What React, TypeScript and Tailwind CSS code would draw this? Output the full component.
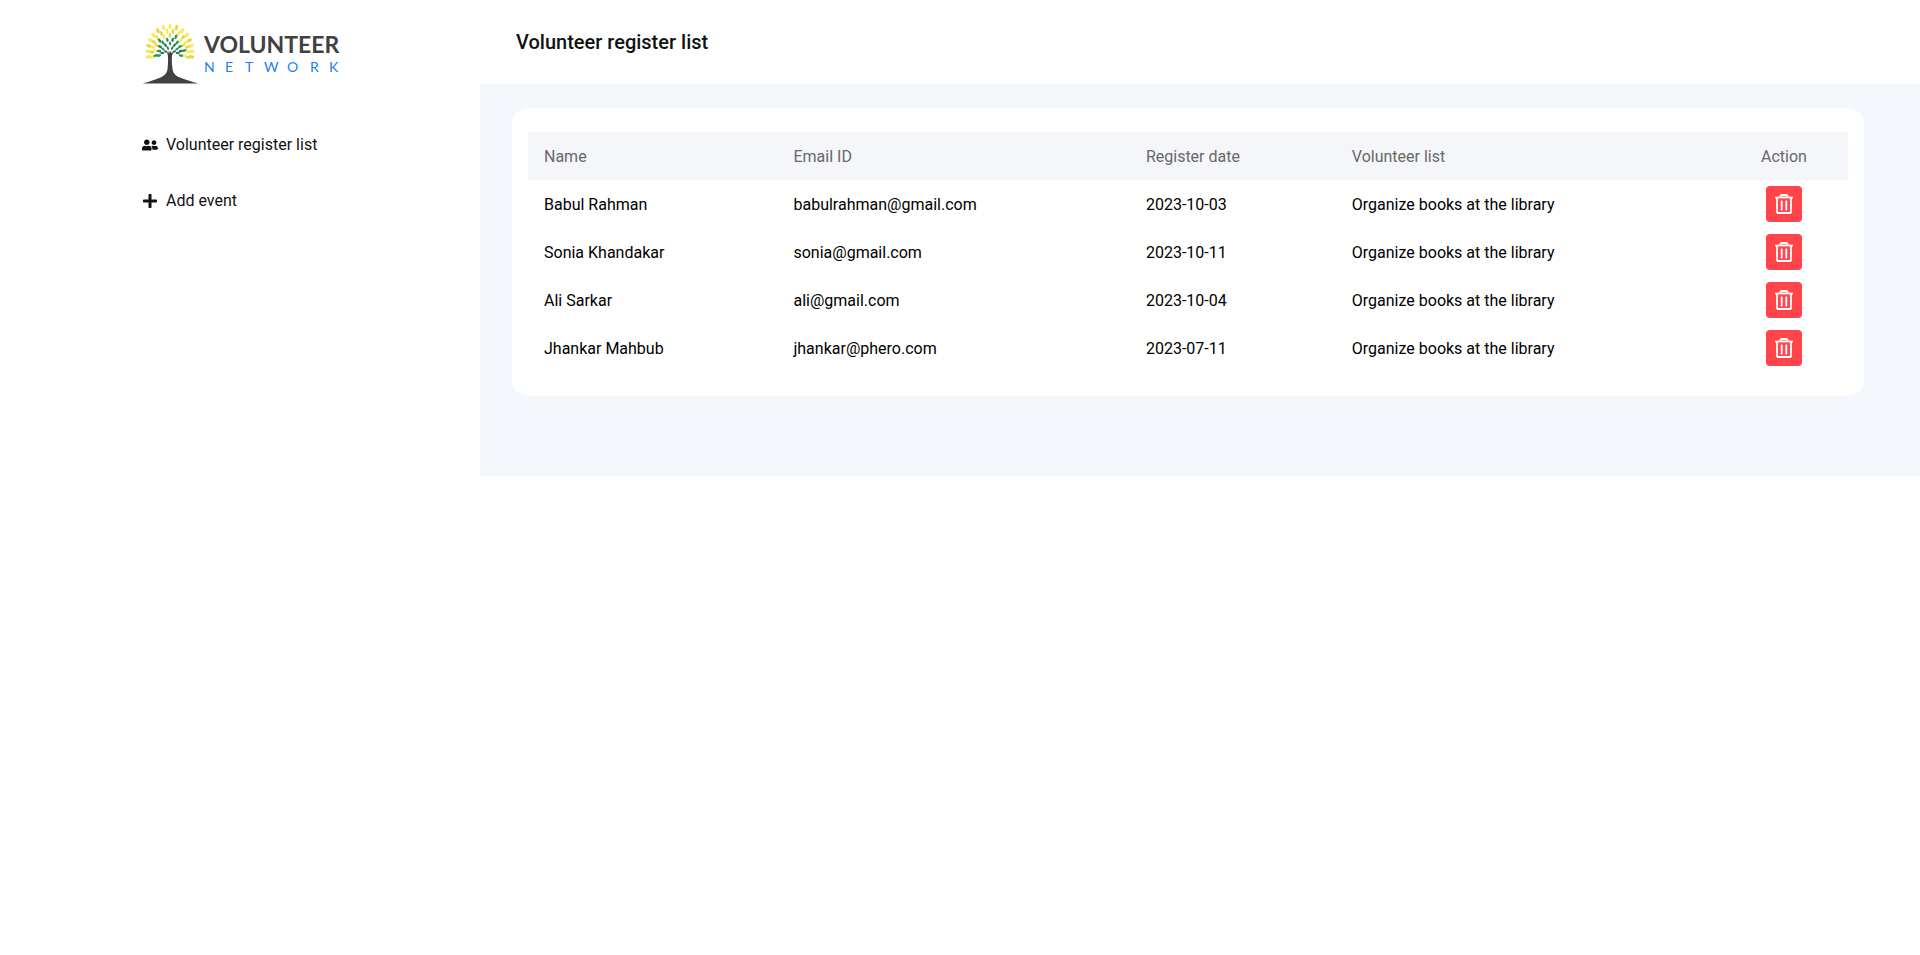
import { FaPlus, FaUserFriends } from "react-icons/fa";

const volunteers = [
  { name: "Babul Rahman", email: "babulrahman@gmail.com", date: "2023-10-03", event: "Organize books at the library" },
  { name: "Sonia Khandakar", email: "sonia@gmail.com", date: "2023-10-11", event: "Organize books at the library" },
  { name: "Ali Sarkar", email: "ali@gmail.com", date: "2023-10-04", event: "Organize books at the library" },
  { name: "Jhankar Mahbub", email: "jhankar@phero.com", date: "2023-07-11", event: "Organize books at the library" },
];

const YELLOW = "#faea55";
const GOLD = "#ecd545";
const GREEN = "#1f9d55";
const DARK = "#2a7355";

// Rings of leaves that fan out from the top of the trunk.
const rings = [
  { radius: 26.5, count: 15, spread: 200, colors: [YELLOW, YELLOW, GOLD] },
  { radius: 22, count: 14, spread: 206, colors: [YELLOW, GOLD] },
  { radius: 17.5, count: 11, spread: 200, colors: [GREEN, YELLOW, GOLD] },
  { radius: 13.5, count: 10, spread: 206, colors: [GREEN, GREEN, DARK] },
  { radius: 9.5, count: 7, spread: 180, colors: [DARK, GREEN] },
  { radius: 5.5, count: 4, spread: 140, colors: [DARK] },
];

function Logo() {
  return (
    <svg viewBox="0 0 196 60" className="h-15 w-[196px] overflow-visible" role="img" aria-label="Volunteer Network">
      {rings.map((ring) =>
        Array.from({ length: ring.count }, (_, i) => {
          const angle = -ring.spread / 2 + (ring.spread * i) / (ring.count - 1);
          const stretch = 1 - 0.18 * Math.pow(Math.sin((angle * Math.PI) / 180), 2);
          const size = 0.6 + ring.radius / 52;
          return (
            <ellipse
              key={`${ring.radius}-${i}`}
              cx="28"
              cy={29 - ring.radius * stretch}
              rx={1.45 * size}
              ry={2.6 * size}
              fill={ring.colors[i % ring.colors.length]}
              transform={`rotate(${angle} 28 29)`}
            />
          );
        }),
      )}
      <path
        d="M24.600 27.500l1.900 1.900.2-3 1.200 2.600 1.100-2.600.3 2.800 2.200-1.700-1.500 3.900c-.3 3-.2 7 .3 12 .6 5.500 3 8.400 8.200 10.400 5 2 12.200 4.100 18 5.700H.5c6-1.600 12.700-3.700 17.300-5.700 5.200-2.200 7.400-4.900 7.900-10.400.5-6 .5-9.300.1-12.300z"
        fill="#424142"
      />
      <text x="62" y="29" fontSize="23" fontWeight="700" fill="#424142" fontFamily="Lato, sans-serif">
        VOLUNTEER
      </text>
      {"NETWORK".split("").map((letter, i) => (
        <text
          key={i}
          x={[62, 83, 103, 122, 145, 168, 187][i]}
          y="48"
          fontSize="14"
          fill="#2080f5"
          fontFamily="Lato, sans-serif"
        >
          {letter}
        </text>
      ))}
    </svg>
  );
}

function TrashIcon() {
  return (
    <svg viewBox="0 0 24 24" className="size-6" fill="none" stroke="currentColor" strokeWidth="1.8" aria-hidden="true">
      <path d="M3 5.500h18" />
      <path d="M8.300 5.400c0-1.600.6-2.400 1.800-2.400h3.800c1.200 0 1.800.8 1.800 2.400" />
      <path d="M5 5.500v14.600c0 .6.300.9.900.9h12.200c.6 0 .9-.3.900-.9V5.500" />
      <path d="M9.700 8.500v10M14.300 8.500v10" />
    </svg>
  );
}

export default function App() {
  return (
    <div className="grid grid-cols-4 bg-white font-[Roboto,sans-serif] text-base text-black">
      <aside className="flex flex-col items-center pt-6">
        <div className="flex flex-col items-start">
          <Logo />
          <nav className="mt-[49px] flex flex-col items-start gap-8 text-[#111]">
            <a href="#list" className="flex items-center gap-2">
              <FaUserFriends className="size-4" />
              Volunteer register list
            </a>
            <a href="#add" className="flex items-center gap-2">
              <FaPlus className="size-4" />
              Add event
            </a>
          </nav>
        </div>
      </aside>

      <main className="col-span-3">
        <header className="flex h-[84px] items-center px-9">
          <h1 className="text-xl font-medium text-[#111]">Volunteer register list</h1>
        </header>
        <section className="bg-[#f4f7fc] px-8 pt-6 pb-20">
          <div className="mr-6 rounded-2xl bg-white px-4 py-6">
            <table className="w-full table-fixed text-left">
              <colgroup>
                <col className="w-[18.9%]" />
                <col className="w-[26.7%]" />
                <col className="w-[15.6%]" />
                <col />
                <col className="w-32" />
              </colgroup>
              <thead className="bg-[#f5f6fa] text-[#686868]">
                <tr className="h-12">
                  <th className="px-4 pt-0.5 font-normal">Name</th>
                  <th className="px-4 pt-0.5 font-normal">Email ID</th>
                  <th className="px-4 pt-0.5 font-normal">Register date</th>
                  <th className="px-4 pt-0.5 font-normal">Volunteer list</th>
                  <th className="px-4 pt-0.5 text-center font-normal">Action</th>
                </tr>
              </thead>
              <tbody>
                {volunteers.map((v) => (
                  <tr key={v.email} className="h-12">
                    <td className="px-4 pt-0.5">{v.name}</td>
                    <td className="px-4 pt-0.5">{v.email}</td>
                    <td className="px-4 pt-0.5">{v.date}</td>
                    <td className="px-4 pt-0.5">{v.event}</td>
                    <td className="px-4">
                      <button
                        type="button"
                        aria-label={`Delete ${v.name}`}
                        className="mx-auto flex size-9 items-center justify-center rounded bg-[#ff444a] text-white"
                      >
                        <TrashIcon />
                      </button>
                    </td>
                  </tr>
                ))}
              </tbody>
            </table>
          </div>
        </section>
      </main>
    </div>
  );
}
